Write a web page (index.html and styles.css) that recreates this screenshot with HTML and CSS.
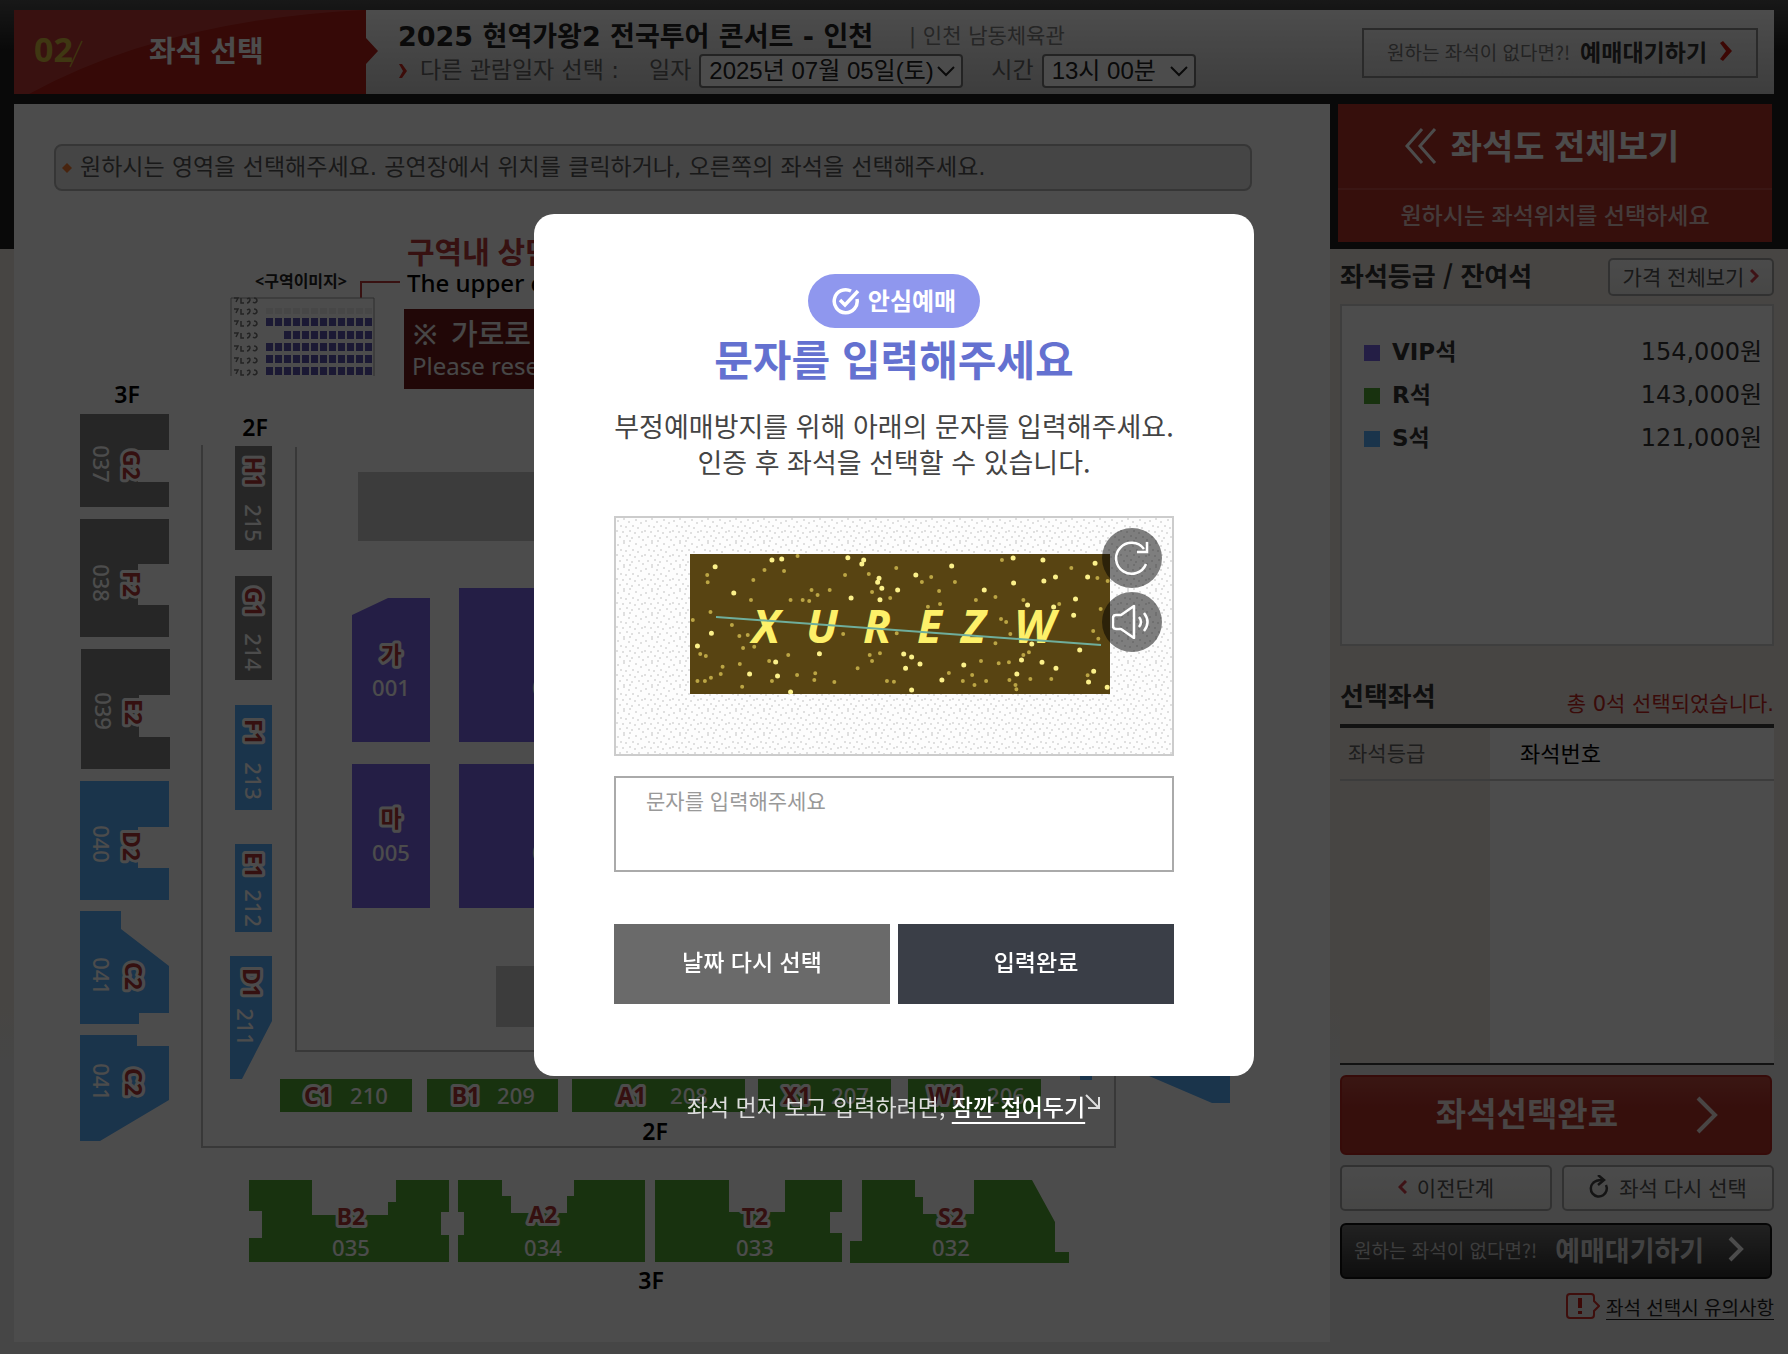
FILE: index.html
```html
<!DOCTYPE html>
<html lang="ko">
<head>
<meta charset="utf-8">
<meta name="viewport" content="width=device-width, initial-scale=1">
<title>좌석 선택</title>
<link rel="stylesheet" href="styles.css">
</head>
<body>
<div class="page">
  <header class="topbar">
    <div class="step">
      <svg class="step-bg" viewBox="0 0 364 84" preserveAspectRatio="none" aria-hidden="true">
        <path d="M0 0H352V28L364 41L352 54V84H0Z" fill="#b42018"/>
        <path d="M0 0H350Q150 10 15 84H0Z" fill="#c03b38"/>
      </svg>
      <span class="step-no">02</span>
      <svg class="step-slash" viewBox="0 0 14 28" aria-hidden="true"><path d="M1 27L13 1" stroke="#cfae35" stroke-width="1.5"/></svg>
      <h1 class="step-name">좌석 선택</h1>
    </div>
    <div class="show">
      <div class="show-line">
        <strong class="show-title">2025 현역가왕2 전국투어 콘서트 - 인천</strong>
        <span class="show-place">| 인천 남동체육관</span>
      </div>
      <div class="show-date">
        <svg class="red-arrow" viewBox="0 0 10 16" aria-hidden="true"><path d="M1 1L4 1L9 8L4 15H1L5 8Z" fill="#c8291f"/></svg>
        <span class="date-intro">다른 관람일자 선택 :</span>
        <label class="date-label" for="date">일자</label>
        <span class="pick pick-date">
          <select id="date"><option>2025년 07월 05일(토)</option></select>
          <svg viewBox="0 0 18 11" aria-hidden="true"><path d="M1 1L9 9L17 1" fill="none" stroke="#222" stroke-width="2"/></svg>
        </span>
        <label class="time-label" for="time">시간</label>
        <span class="pick pick-time">
          <select id="time"><option>13시 00분</option></select>
          <svg viewBox="0 0 18 11" aria-hidden="true"><path d="M1 1L9 9L17 1" fill="none" stroke="#222" stroke-width="2"/></svg>
        </span>
      </div>
    </div>
    <button class="wait-top" type="button">
      <span>원하는 좌석이 없다면?!</span><strong>예매대기하기</strong>
      <svg width="14" height="20" viewBox="0 0 14 20" aria-hidden="true"><path d="M1 2L4 0L13 10L4 20L1 18L7 10Z" fill="#c8190f"/></svg>
    </button>
  </header>

  <div class="columns">
    <main class="seats">
      <p class="notice"><svg width="10" height="10" viewBox="0 0 10 10" aria-hidden="true"><path d="M5 0L10 5L5 10L0 5Z" fill="#f07a35"/></svg><span>원하시는 영역을 선택해주세요. 공연장에서 위치를 클릭하거나, 오른쪽의 좌석을 선택해주세요.</span></p>
      <svg class="map" viewBox="14 230 1316 1112" role="img" aria-label="좌석 배치도">
        <defs>
          <g id="row"><path d="M0 0H108" stroke="#5b55b0" stroke-width="8" stroke-dasharray="7 2"/></g>
          <path id="mark" d="M0 0h4l-2 4M7 0v5h3M13 1q3-2 3 1q-1 3-3 3M20 0q3 0 3 3q-2 3-4 1" fill="none" stroke="#777" stroke-width="1.5"/>
        </defs>
        <text class="m-head" x="407" y="263">구역내 상단</text>
        <text class="m-en" x="407" y="292">The upper end</text>
        <text class="m-cap" x="301" y="287">&lt;구역이미지&gt;</text>
        <path d="M361 298V282H400" fill="none" stroke="#bc3a3a" stroke-width="2"/>
        <path d="M231 376V298H374V376" fill="none" stroke="#999" stroke-width="1"/>
        <g>
          <use href="#row" x="266" y="322"/><path d="M284 335H373" stroke="#5b55b0" stroke-width="8" stroke-dasharray="7 2"/>
          <use href="#row" x="266" y="347"/><use href="#row" x="266" y="359"/><use href="#row" x="266" y="371"/>
          <path d="M266 311H374" stroke="#efefef" stroke-width="6" stroke-dasharray="7 2"/>
          <use href="#mark" x="234" y="298"/><use href="#mark" x="234" y="309"/><use href="#mark" x="234" y="321"/><use href="#mark" x="234" y="333"/><use href="#mark" x="234" y="346"/><use href="#mark" x="234" y="358"/><use href="#mark" x="234" y="370"/>
        </g>
        <rect x="404" y="309" width="400" height="80" fill="#6e1a1a"/>
        <text class="m-warn" x="413" y="345">※</text>
        <text class="m-warn" x="451" y="345">가로로 예매</text>
        <text class="m-warn-en" x="412" y="375">Please reserve</text>

        <g fill="none" stroke="#bdbdbd" stroke-width="2">
          <path d="M202 445V1147H1115V445"/><path d="M296 447V1051H1020V447"/>
        </g>
        <g fill="#c9c9c9"><rect x="358" y="472" width="600" height="69"/><rect x="496" y="966" width="300" height="61"/></g>

        <g fill="#808080">
          <path d="M80 414H169V450H138V482H169V507H80Z"/>
          <path d="M80 519H169V564H138V605H169V637H80Z"/>
          <path d="M81 649H170V695H139V737H170V769H81Z"/>
          <rect x="235" y="446" width="37" height="104"/><rect x="235" y="576" width="37" height="104"/>
        </g>
        <g fill="#57adfa">
          <path d="M80 781H169V827H138V868H169V900H80Z"/>
          <path d="M80 911H121V929L169 966V1013H139V1024H80Z"/>
          <path d="M80 1035H137V1046H169V1100L100 1141H80Z"/>
          <rect x="235" y="705" width="37" height="105"/><rect x="235" y="844" width="37" height="88"/>
          <path d="M230 956H272V1021L242 1079H230Z"/>
          <path d="M1149 1076L1140 1060H1230V1103H1212Z"/><rect x="1080" y="1060" width="12" height="20"/>
        </g>
        <g fill="#7b66e6">
          <path d="M352 615L388 598H430V742H352Z"/><rect x="459" y="588" width="90" height="154"/>
          <rect x="352" y="764" width="78" height="144"/><rect x="459" y="764" width="90" height="144"/>
        </g>
        <g fill="#53a733">
          <rect x="280" y="1079" width="132" height="33"/><rect x="427" y="1079" width="131" height="33"/><rect x="572" y="1079" width="173" height="33"/><rect x="758" y="1079" width="133" height="33"/><rect x="908" y="1079" width="133" height="33"/>
          <path d="M249 1180H312V1215H388V1202H396V1180H449V1212H441V1235H449V1262H249V1238H262V1211H249Z"/>
          <path d="M458 1180H502V1196H511V1213H567V1196H574V1180H645V1262H458V1235H464V1212H458Z"/>
          <path d="M655 1180H729V1212H785V1180H842V1212H830V1233H842V1262H655Z"/>
          <path d="M862 1180H915V1197H923V1214H974V1180H1032L1055 1222V1252H1069V1263H850V1241H862Z"/>
        </g>

        <g class="m-floor"><text x="127" y="403">3F</text><text x="255" y="436">2F</text><text x="655" y="1140">2F</text><text x="651" y="1289">3F</text></g>

        <g class="m-zone">
          <text transform="translate(123 465) rotate(90)">G2</text><text transform="translate(123 584) rotate(90)">F2</text><text transform="translate(125 712) rotate(90)">E2</text><text transform="translate(123 846) rotate(90)">D2</text><text transform="translate(125 976) rotate(90)">C2</text><text transform="translate(125 1082) rotate(90)">C2</text>
          <text transform="translate(245 472) rotate(90)">H1</text><text transform="translate(245 602) rotate(90)">G1</text><text transform="translate(245 732) rotate(90)">F1</text><text transform="translate(245 865) rotate(90)">E1</text><text transform="translate(243 983) rotate(90)">D1</text>
          <text x="391" y="663">가</text><text x="391" y="827">마</text>
          <text x="318" y="1104">C1</text><text x="466" y="1104">B1</text><text x="632" y="1104">A1</text><text x="797" y="1104">X1</text><text x="946" y="1104">W1</text>
          <text x="351" y="1225">B2</text><text x="543" y="1223">A2</text><text x="755" y="1225">T2</text><text x="951" y="1225">S2</text>
        </g>
        <g class="m-num">
          <text transform="translate(93 464) rotate(90)">037</text><text transform="translate(93 583) rotate(90)">038</text><text transform="translate(95 711) rotate(90)">039</text><text transform="translate(93 844) rotate(90)">040</text><text transform="translate(93 976) rotate(90)">041</text><text transform="translate(93 1082) rotate(90)">041</text>
          <text transform="translate(245 523) rotate(90)">215</text><text transform="translate(245 652) rotate(90)">214</text><text transform="translate(245 781) rotate(90)">213</text><text transform="translate(245 908) rotate(90)">212</text><text transform="translate(237 1027) rotate(90)">211</text>
          <text x="391" y="696">001</text><text x="391" y="861">005</text><text x="551" y="696">002</text><text x="551" y="861">006</text>
          <text x="369" y="1104">210</text><text x="516" y="1104">209</text><text x="689" y="1104">208</text><text x="850" y="1104">207</text><text x="1006" y="1104">206</text>
          <text x="351" y="1256">035</text><text x="543" y="1256">034</text><text x="755" y="1256">033</text><text x="951" y="1256">032</text>
        </g>
      </svg>
    </main>

    <aside class="side">
      <div class="all-view">
        <a class="all-title" href="#"><svg width="32" height="36" viewBox="0 0 32 36" aria-hidden="true"><path d="M17 1L2 18L17 35M30 1L15 18L30 35" fill="none" stroke="#fff" stroke-width="3"/></svg><span>좌석도 전체보기</span></a>
        <p class="all-sub">원하시는 좌석위치를 선택하세요</p>
      </div>
      <section class="grades">
        <div class="side-head">
          <h2>좌석등급 / 잔여석</h2>
          <button class="light price-all" type="button">가격 전체보기<svg width="9" height="14" viewBox="0 0 9 14" aria-hidden="true"><path d="M1 1L7 7L1 13" fill="none" stroke="#d0404a" stroke-width="3"/></svg></button>
        </div>
        <ul class="grade-list">
          <li><i class="chip vip"></i><strong>VIP석</strong><span>154,000원</span></li>
          <li><i class="chip r"></i><strong>R석</strong><span>143,000원</span></li>
          <li><i class="chip s"></i><strong>S석</strong><span>121,000원</span></li>
        </ul>
      </section>
      <section class="chosen">
        <div class="chosen-head"><h2>선택좌석</h2><p>총 0석 선택되었습니다.</p></div>
        <table class="chosen-table">
          <thead><tr><th scope="col">좌석등급</th><th scope="col">좌석번호</th></tr></thead>
          <tbody><tr><td></td><td></td></tr></tbody>
        </table>
      </section>
      <div class="actions">
        <button class="done" type="button"><span>좌석선택완료</span><svg width="22" height="38" viewBox="0 0 22 38" aria-hidden="true"><path d="M2 2L19 19L2 36" fill="none" stroke="#f4e6e4" stroke-width="4"/></svg></button>
        <div class="pair">
          <button class="light" type="button"><svg width="9" height="14" viewBox="0 0 9 14" aria-hidden="true"><path d="M8 1L2 7L8 13" fill="none" stroke="#d0404a" stroke-width="3"/></svg>이전단계</button>
          <button class="light" type="button"><svg width="20" height="24" viewBox="0 0 20 24" aria-hidden="true"><path d="M4 8A8 8 0 1 0 17 10M4 8Q7 5 13 5" fill="none" stroke="#444" stroke-width="2.5"/><path d="M9 0L15 5L9 10" fill="none" stroke="#444" stroke-width="2.5"/></svg>좌석 다시 선택</button>
        </div>
        <button class="wait" type="button"><span>원하는 좌석이 없다면?!</span><strong>예매대기하기</strong><svg width="16" height="26" viewBox="0 0 16 26" aria-hidden="true"><path d="M2 2L13 13L2 24" fill="none" stroke="#fff" stroke-width="4"/></svg></button>
        <div class="caution"><svg width="34" height="26" viewBox="0 0 34 26" aria-hidden="true"><path d="M4 1H25Q28 1 28 4V8L33 13L28 18V22Q28 25 25 25H4Q1 25 1 22V4Q1 1 4 1Z" fill="none" stroke="#d0302a" stroke-width="2"/><path d="M14 5V15M14 18V21" stroke="#c8201a" stroke-width="4"/></svg><a href="#">좌석 선택시 유의사항</a></div>
      </div>
    </aside>
  </div>
</div>

<div class="overlay">
  <section class="modal" role="dialog" aria-modal="true" aria-labelledby="modal-title">
    <div class="badge"><svg width="28" height="28" viewBox="0 0 28 28" aria-hidden="true"><path d="M19 4A11.500 11.500 0 1 0 25 12" fill="none" stroke="#fff" stroke-width="3.500"/><path d="M8 13L13 18L26 4" fill="none" stroke="#fff" stroke-width="3.500"/></svg><span>안심예매</span></div>
    <h2 class="modal-title" id="modal-title">문자를 입력해주세요</h2>
    <p class="modal-text">부정예매방지를 위해 아래의 문자를 입력해주세요.<br>인증 후 좌석을 선택할 수 있습니다.</p>
    <div class="captcha">
      <svg class="grain" width="100%" height="100%" aria-hidden="true">
        <defs><pattern id="grain" width="28" height="24" patternUnits="userSpaceOnUse"><path d="M2 3h0M8 1h0M13 4h0M20 2h0M25 5h0M5 8h0M10 9h0M17 8h0M22 10h0M1 13h0M7 14h0M14 13h0M19 15h0M26 14h0M4 19h0M11 18h0M16 20h0M23 19h0M8 23h0M27 22h0M14 23h0" stroke="#d6d6d6" stroke-width="2" stroke-linecap="round"/></pattern></defs>
        <rect width="100%" height="100%" fill="url(#grain)"/>
      </svg>
      <svg class="code" width="420" height="140" viewBox="0 0 420 140" role="img" aria-label="보안문자">
        <rect width="420" height="140" fill="#584412"/>
        <g transform="scale(.4656 .3333) translate(-344 -162)" fill="none" stroke-linecap="round">
          <path d="M398 200h0M520 180h0M541 177h0M683 173h0M717 180h0M713 192h0M906 198h0M1038 174h0M750 235h0M747 247h0M756 265h0M790 270h0M690 294h0M752 299h0M438 279h0M829 225h0M1214 190h0M1102 180h0M1129 231h0M1104 243h0M1039 249h0M1198 231h0M976 270h0M1172 297h0M1168 346h0M360 438h0M622 461h0M528 486h0M472 522h0M532 528h0M803 462h0M820 471h0M838 492h0M807 505h0M885 540h0M820 570h0M1056 480h0M1100 487h0M1130 505h0M1181 450h0M1211 514h0M1046 522h0M1200 546h0M932 495h0M560 576h0M1069 315h0M1125 321h0M1240 562h0M1078 432h0M390 400h0" stroke="#fbf08a" stroke-width="5" vector-effect="non-scaling-stroke"/>
          <path d="M381 225h0M382 247h0M504 210h0M480 240h0M546 213h0M575 168h0M677 225h0M728 222h0M787 204h0M842 246h0M862 231h0M913 246h0M879 273h0M881 312h0M605 270h0M618 285h0M644 270h0M560 300h0M586 300h0M600 303h0M475 300h0M735 276h0M774 294h0M388 336h0M350 360h0M434 375h0M450 408h0M468 405h0M482 440h0M458 444h0M366 462h0M378 468h0M414 500h0M410 522h0M451 492h0M514 483h0M555 465h0M520 543h0M574 525h0M611 540h0M654 546h0M456 560h0M360 543h0M376 543h0M389 533h0M730 465h0M752 460h0M735 483h0M704 505h0M767 543h0M782 545h0M900 519h0M930 543h0M950 525h0M955 555h0M969 483h0M1007 490h0M1029 487h0M1032 402h0M1012 357h0M1023 366h0M1000 291h0M958 300h0M1014 180h0M1060 300h0M1137 312h0M1163 204h0M1219 234h0M1241 243h0M1226 327h0M1210 393h0M1221 416h0M1072 457h0M1060 465h0M1075 537h0M1043 555h0M1045 568h0M1120 537h0M1198 526h0M855 320h0M788 400h0M673 402h0M1000 430h0M1030 540h0M980 543h0M613 520h0M500 350h0" stroke="#bba544" stroke-width="4" vector-effect="non-scaling-stroke"/>
        </g>
        <text class="code-text" x="62 116 173 227 271 324" y="89">XUREZW</text>
        <path d="M26 63L411 91" stroke="#6fae9c" stroke-width="2"/>
      </svg>
      <div class="captcha-tools">
        <button type="button" aria-label="새로고침"><svg width="36" height="36" viewBox="0 0 36 36" aria-hidden="true"><path d="M32 24A15.500 15.500 0 1 1 30 9" fill="none" stroke="#fff" stroke-width="2.500"/><path d="M33 2V12H23" fill="none" stroke="#fff" stroke-width="2.500"/></svg></button>
        <button type="button" aria-label="음성으로 듣기"><svg width="40" height="34" viewBox="0 0 40 34" aria-hidden="true"><path d="M22 1V33L9 24H4Q1 24 1 21V13Q1 10 4 10H9Z" fill="none" stroke="#fff" stroke-width="2.500" stroke-linejoin="round"/><path d="M27 12Q31 17 27 22M32 8Q39 17 32 26" fill="none" stroke="#fff" stroke-width="2.500"/></svg></button>
      </div>
    </div>
    <form class="entry">
      <input type="text" aria-label="문자 입력" placeholder="문자를 입력해주세요">
      <div class="entry-buttons">
        <button class="again" type="button">날짜 다시 선택</button>
        <button class="submit" type="button">입력완료</button>
      </div>
    </form>
  </section>
  <p class="fold">좌석 먼저 보고 입력하려면, <a href="#">잠깐 접어두기<svg width="16" height="16" viewBox="0 0 16 16" aria-hidden="true"><path d="M1 1L13 13M14 3V14H3" fill="none" stroke="#ddd" stroke-width="2"/></svg></a></p>
</div>
</body>
</html>
```
FILE: styles.css
```css
* { box-sizing: border-box; }

body {
  margin: 0;
  background: #e9e9e9;
  color: #333;
  font-family: "DejaVu Sans", "Noto Sans CJK KR", sans-serif;
  font-size: 23px;
}

h1, h2, p, ul { margin: 0; padding: 0; }
button, select, input { font: inherit; margin: 0; }
button { cursor: pointer; }
svg { flex: none; }

.page {
  min-height: 100vh;
  padding: 10px 0 12px 14px;
  background:
    linear-gradient(#505050, #202020 50px, #202020) no-repeat 0 0 / 100% 249px,
    linear-gradient(#efe8e0, #efe8e0 1000px, #e9e9e9 1060px);
}

/* top bar */
.topbar {
  display: flex;
  height: 84px;
  margin-right: 14px;
  background: linear-gradient(#fff, #cdcdcd);
}

.step {
  position: relative;
  display: flex;
  align-items: center;
  width: 364px;
  padding: 0 0 6px 20px;
  font-family: "Noto Sans CJK KR", sans-serif;
}

.step-bg { position: absolute; inset: 0; width: 100%; height: 100%; }
.step-no { position: relative; color: #d3b83d; font: 700 34px/40px "Open Sans", sans-serif; }
.step-slash { position: relative; width: 14px; height: 28px; margin: 10px 0 0 -4px; }
.step-name { position: relative; margin-left: 66px; color: #fff; font-size: 29px; line-height: 40px; font-weight: 700; }

.show { flex: 1; padding: 7px 0 0 20px; }
.show-line { display: flex; align-items: center; height: 34px; white-space: nowrap; }
.show-title { color: #222; font-size: 27px; }
.show-place { margin-left: 36px; color: #808080; font-size: 21px; }
.show-date { display: flex; align-items: center; height: 40px; color: #666; white-space: nowrap; }
.date-intro, .date-label, .time-label { padding-bottom: 6px; }
.red-arrow { width: 10px; height: 16px; margin-right: 12px; }
.date-label { margin: 0 8px 0 30px; }
.time-label { margin: 0 8px 0 28px; }

.pick { position: relative; display: block; height: 34px; }
.pick-date { width: 264px; }
.pick-time { width: 154px; }
.pick select {
  width: 100%;
  height: 34px;
  padding: 0 8px;
  appearance: none;
  border: 2px solid #767676;
  border-radius: 4px;
  background: #fff;
  color: #222;
  font-family: "Liberation Sans", "Noto Sans CJK KR", sans-serif;
  font-size: 24px;
  line-height: 30px;
}
.pick svg { position: absolute; right: 8px; top: 12px; width: 18px; height: 11px; pointer-events: none; }

.wait-top {
  display: flex;
  align-items: center;
  justify-content: center;
  gap: 10px;
  width: 396px;
  height: 50px;
  margin: 18px 16px 0 0;
  padding: 0 0 4px;
  border: 2px solid #8c8c8c;
  background: linear-gradient(#f4f4f4, #dadada);
  color: #777;
  font-family: "Noto Sans CJK KR", sans-serif;
  font-size: 19px;
  white-space: nowrap;
}
.wait-top strong { color: #333; font-size: 23px; }
.wait-top svg { margin-left: 2px; }

/* seat map column */
.columns { display: grid; grid-template-columns: minmax(0, 1fr) 458px; margin-top: 10px; }
.seats { background: #fff; padding-top: 40px; }
.notice {
  display: flex;
  align-items: center;
  gap: 8px;
  height: 47px;
  margin: 0 78px 39px 40px;
  padding-left: 6px;
  border: 2px solid #b4b4b4;
  border-radius: 8px;
  background: #e8e8e8;
  color: #555;
}
.notice span { padding-bottom: 5px; }
.map { display: block; width: 100%; height: auto; font-family: "Noto Sans", "Noto Sans CJK KR", sans-serif; }
.m-head { fill: #b83a3a; font-size: 30px; font-weight: 700; }
.m-en { fill: #000; font-size: 24px; font-weight: 500; }
.m-cap { fill: #222; font-size: 16px; font-weight: 700; text-anchor: middle; }
.m-warn { fill: #eee; font-size: 29px; font-weight: 500; }
.m-warn-en { fill: #eee; font-size: 24px; }
.m-floor { fill: #000; font-size: 23px; font-weight: 600; text-anchor: middle; }
.m-zone { fill: #b13636; stroke: #fff; stroke-width: 6px; stroke-linejoin: round; paint-order: stroke; font-size: 23px; font-weight: 700; text-anchor: middle; }
.m-num { fill: #fff; font-size: 22px; font-weight: 500; text-anchor: middle; }

/* right column */
.side { padding-right: 14px; }
.all-view {
  height: 138px;
  margin: 0 2px 0 8px;
  background: #b5332b;
  color: #fff;
  text-align: center;
  font-family: "Noto Sans CJK KR", sans-serif;
}
.all-title {
  display: flex;
  align-items: center;
  justify-content: center;
  gap: 14px;
  height: 86px;
  padding-right: 26px;
  border-bottom: 2px solid #c44a44;
  color: #fff;
  font-size: 34px;
  font-weight: 700;
  text-decoration: none;
}
.all-sub { font-size: 23px; line-height: 48px; color: #e5c6c3; font-weight: 500; }

.grades, .chosen, .actions { margin-left: 10px; }
.side h2 { color: #333; font: 700 26px/34px "Noto Sans CJK KR", sans-serif; }
.side-head { display: flex; justify-content: space-between; align-items: center; padding-top: 16px; height: 54px; }
.side-head h2 { padding-bottom: 4px; }
.light {
  display: flex;
  align-items: center;
  justify-content: center;
  gap: 10px;
  padding: 0 0 3px;
  border: 2px solid #a6a6a6;
  border-radius: 5px;
  background: linear-gradient(#fafafa, #ececea);
  color: #555;
  font-family: "Noto Sans CJK KR", sans-serif;
  font-size: 21px;
}
.price-all { width: 166px; height: 38px; gap: 6px; }

.grade-list {
  height: 342px;
  margin-top: 8px;
  padding: 25px 10px 0 22px;
  border: 2px solid #cfcfcf;
  background: #fff;
  list-style: none;
}
.grade-list li { display: flex; align-items: center; height: 43px; }
.grade-list strong { flex: 1; margin-left: 12px; padding-bottom: 6px; }
.grade-list span { padding-bottom: 6px; font-size: 24px; }
.chip { width: 16px; height: 16px; }
.vip { background: #7b66e6; }
.r { background: #53a733; }
.s { background: #57adfa; }

.chosen { margin-top: 32px; }
.chosen-head { display: flex; justify-content: space-between; align-items: flex-start; height: 46px; }
.chosen-head p { padding-top: 12px; color: #c4271f; font-size: 21px; line-height: 28px; }
.chosen-table { width: 100%; table-layout: fixed; border-collapse: collapse; border-top: 4px solid #3c3c3c; border-bottom: 2px solid #3c3c3c; background: #fff; }
.chosen-table th { height: 54px; padding: 0 0 3px 30px; border-bottom: 2px solid #c8c8c8; color: #000; font-size: 22px; font-weight: 400; text-align: left; }
.chosen-table th:first-child { width: 150px; padding-left: 8px; color: #666; font-size: 21px; }
.chosen-table th:first-child, .chosen-table td:first-child { background: #efe8e0; }
.chosen-table td { height: 284px; padding: 0; }

.actions { display: flex; flex-direction: column; gap: 10px; margin-top: 10px; }
.done {
  display: flex;
  align-items: center;
  justify-content: flex-end;
  height: 80px;
  margin-right: 2px;
  padding: 0 52px 0 0;
  border: 2px solid #b5261e;
  border-radius: 6px;
  background: linear-gradient(#c24c40, #b5332b 30px);
  color: #f4e6e4;
  font: 700 33px/40px "Noto Sans CJK KR", sans-serif;
}
.done span { padding: 0 52px 6px 0; }
.done svg { margin-left: 26px; }
.pair { display: grid; grid-template-columns: 1fr 1fr; gap: 10px; }
.pair button { height: 46px; }
.wait {
  display: flex;
  align-items: center;
  gap: 18px;
  height: 56px;
  margin: 2px 2px 0 0;
  padding: 0 0 4px 12px;
  border: 2px solid #111;
  border-radius: 6px;
  background: linear-gradient(#707070, #303030);
  color: #ccc;
  font-family: "Noto Sans CJK KR", sans-serif;
  font-size: 19px;
  white-space: nowrap;
}
.wait strong { color: #ddd; font-size: 27px; }
.wait svg { margin-left: 6px; }
.caution { display: flex; align-items: center; justify-content: flex-end; gap: 6px; height: 34px; font-family: "Noto Sans CJK KR", sans-serif; font-size: 19px; }
.caution a { color: #222; text-underline-offset: 4px; }

/* dialog */
.overlay {
  position: fixed;
  inset: 0;
  display: flex;
  flex-direction: column;
  align-items: center;
  padding-top: 214px;
  background: rgba(0, 0, 0, .7);
  font-family: "Noto Sans CJK KR", sans-serif;
}
.modal {
  display: flex;
  flex-direction: column;
  align-items: center;
  width: 720px;
  padding: 60px 80px 72px;
  border-radius: 20px;
  background: #fff;
}
.badge {
  display: flex;
  align-items: center;
  justify-content: center;
  gap: 8px;
  width: 172px;
  height: 54px;
  border-radius: 27px;
  background: #8f97ee;
  color: #fff;
  font-size: 24px;
  font-weight: 700;
}
.badge span, .all-title span { padding-bottom: 3px; }
.modal-title { margin-top: 5px; color: #6471d0; font-size: 42px; line-height: 50px; font-weight: 700; white-space: nowrap; }
.modal-text { margin-top: 25px; color: #444; font-size: 27px; line-height: 36px; text-align: center; white-space: nowrap; }
.captcha {
  position: relative;
  width: 560px;
  height: 240px;
  margin-top: 36px;
  padding: 36px 0 0 74px;
  border: 2px solid #ccc;
  background: #fdfdfd;
}
.grain { position: absolute; inset: 0; }
.code { position: relative; display: block; }
.code-text { fill: #fdf069; font: italic 700 46px "Open Sans", sans-serif; }
.captcha-tools { position: absolute; top: 10px; right: 10px; display: flex; flex-direction: column; gap: 4px; }
.captcha-tools button {
  display: flex;
  align-items: center;
  justify-content: center;
  width: 60px;
  height: 60px;
  padding: 0;
  border: 0;
  border-radius: 50%;
  background: rgba(0, 0, 0, .5);
}
.entry { width: 100%; margin-top: 20px; }
.entry input {
  display: block;
  width: 100%;
  height: 96px;
  padding: 6px 30px 54px;
  border: 2px solid #aaa;
  background: #fff;
  color: #333;
  font-size: 21px;
}
.entry input::placeholder { color: #999; }
.entry-buttons { display: grid; grid-template-columns: 1fr 1fr; gap: 8px; margin-top: 52px; }
.entry-buttons button { height: 80px; padding: 0 0 6px; border: 0; color: #fff; font-size: 23px; font-weight: 500; }
.again { background: #6a6a6a; }
.submit { background: #3a3e47; }
.fold { margin-top: 12px; color: #ddd; font-size: 23px; line-height: 36px; white-space: nowrap; }
.fold a { color: #fff; font-weight: 500; text-underline-offset: 6px; }
.fold svg { vertical-align: 6px; }
```
